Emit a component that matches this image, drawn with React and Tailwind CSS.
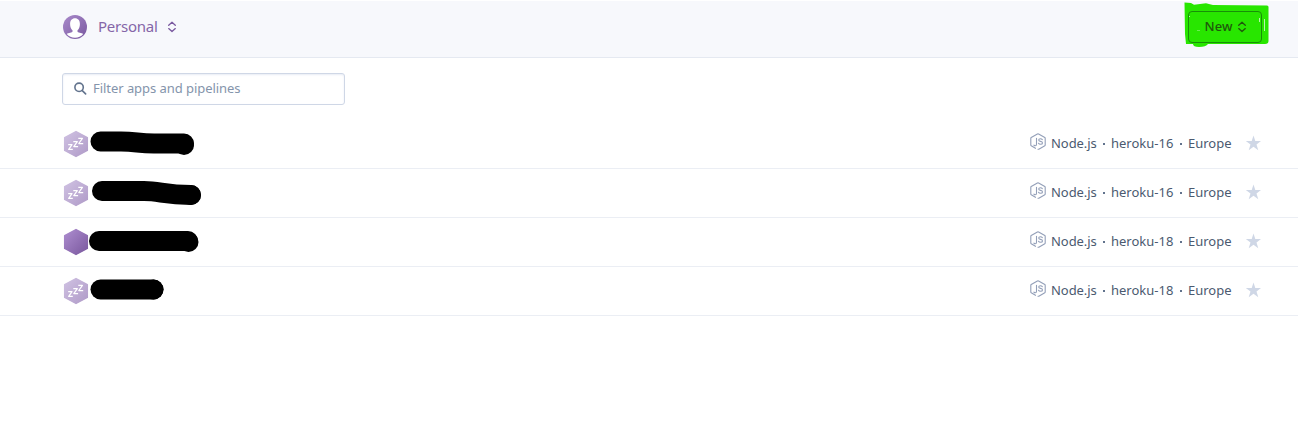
import React from 'react';

const APPS = [
  { id: 1, asleep: true, stack: 'heroku-16', mark: 'M44.500 21.500H65C80 21.700 82 23.200 98 23.500H128', blob: [128, 25] },
  { id: 2, asleep: true, stack: 'heroku-16', mark: 'M46 22 H88 C104 22 108 25.800 135 26', blob: [135, 26] },
  { id: 3, asleep: false, stack: 'heroku-18', mark: 'M43 23 H132', blob: [132.5, 24] },
  { id: 4, asleep: true, stack: 'heroku-18', mark: 'M44.500 22.500H97.500', blob: [97.5, 22.5] },
];

function UpDown({ className }) {
  return (
    <svg className={className} width="10" height="12" viewBox="0 0 10 12" fill="none" stroke="currentColor" strokeWidth="1.300" strokeLinecap="round" strokeLinejoin="round">
      <path d="M1.700 4.200 5 1.200l3.300 3M1.700 7.600 5 10.600l3.300-3" />
    </svg>
  );
}

function Avatar() {
  return (
    <svg className="shrink-0" width="24" height="24" viewBox="0 0 24 24">
      <defs>
        <linearGradient id="avatar" x1="0" y1="0" x2="1" y2="1">
          <stop stopColor="#a98acb" />
          <stop offset="1" stopColor="#79589f" />
        </linearGradient>
      </defs>
      <circle cx="12" cy="12" r="12" fill="url(#avatar)" />
      <path fill="#fff" d="M12 3.300c3 0 4.900 2.200 4.900 5.600 0 2.900-.9 5-2.400 6.300v1.300c0 1.300 4.300 1.300 5.700 2.500A11 11 0 0 1 12 22.800a11 11 0 0 1-8.200-3.800c1.400-1.200 5.700-1.200 5.700-2.500v-1.300C8 13.900 7.100 11.800 7.100 8.900c0-3.400 1.900-5.600 4.900-5.600Z" />
    </svg>
  );
}

function AppMark({ app }) {
  return (
    <svg className="shrink-0" width="150" height="48" viewBox="0 0 150 48">
      <defs>
        <linearGradient id={`hex${app.id}`} x1="0" y1="0" x2="1" y2="1">
          <stop stopColor={app.asleep ? '#cfc1e2' : '#ad8dcf'} />
          <stop offset="1" stopColor={app.asleep ? '#b09bc8' : '#7a589e'} />
        </linearGradient>
      </defs>
      <path d="M20 11.600 31.300 17.600V30.400L20 36.400 8.700 30.400V17.600Z" fill={`url(#hex${app.id})`} stroke={`url(#hex${app.id})`} strokeWidth="1.500" strokeLinejoin="round" />
      {app.asleep && (
        <path d="M12.200 24.600H16L12.700 29.400H16.800M17.300 21.600H21.300L17.800 26.600H22.100M22.300 18.400H26.400L22.800 23.500H27.200" fill="none" stroke="#fff" strokeWidth="1.250" strokeLinejoin="round" />
      )}
      <path d={app.mark} fill="none" stroke="#000" strokeWidth="20" strokeLinecap="round" strokeLinejoin="round" />
      <circle cx={app.blob[0]} cy={app.blob[1]} r="10" />
    </svg>
  );
}

function NodeIcon() {
  return (
    <svg className="shrink-0" width="16" height="18" viewBox="0 0 16 18" fill="none" stroke="#939fb8" strokeWidth="1.100" strokeLinejoin="round" strokeLinecap="round">
      <path d="M5.500 15.300 1.200 12.800Q.8 12.600.8 12V5.400Q.8 4.800 1.200 4.500L7.400 1Q8 .7 8.600 1L14.800 4.500Q15.200 4.800 15.200 5.400V12Q15.200 12.600 14.800 12.800L8.800 16.200Q8.400 16.400 8 16.200" />
      <path d="M6.500 5.300V11.300Q6.500 12.800 5.300 12.800 4.400 12.800 3.900 12.100M12.300 6.600Q11.700 5.800 10.400 5.800 8.700 5.800 8.700 7.100 8.700 8.300 10.500 8.400 12.500 8.600 12.500 9.900 12.500 11.200 10.600 11.200 9 11.200 8.500 10.200" />
    </svg>
  );
}

function Dot() {
  return (
    <span className="flex w-[14px] justify-center">
      <span className="size-[2px] bg-[#62738d]" />
    </span>
  );
}

function Star() {
  return (
    <svg className="mb-[2px] ml-[14px] shrink-0" width="16" height="16" viewBox="0 0 16 16" fill="#cfd7e6">
      <path d="M8.500.5 10.300 6H16L11.500 9.500 13.300 15.200 8.500 11.800 3.700 15.200 5.500 9.500.800 6H6.700Z" />
    </svg>
  );
}

function AppRow({ app }) {
  return (
    <li className="flex h-[49px] items-start justify-between border-b border-[#ebeef4] pl-14 pr-[37px]">
      <AppMark app={app} />
      <div className="flex h-[47px] items-center text-[13px] text-[#4b5a70]">
        <div className="flex pb-[3px]"><NodeIcon /></div>
        <span className="ml-[5px] w-[46px] whitespace-nowrap tracking-[-0.05px]">Node.js</span>
        <Dot />
        <span className="w-[63px] whitespace-nowrap">{app.stack}</span>
        <Dot />
        <span className="w-[43px] whitespace-nowrap">Europe</span>
        <Star />
      </div>
    </li>
  );
}

export default function App() {
  return (
    <div className="h-[424px] overflow-hidden bg-white pt-px font-['Noto_Sans',sans-serif]">
      <header className="flex h-[57px] items-start justify-between border-b border-[#e5e9f1] bg-[#f7f8fc] pl-[63px] pr-[29px]">
        <div className="flex h-[52px] items-center text-[#79589f]">
          <Avatar />
          <span className="ml-[11px] w-[60px] whitespace-nowrap pb-[2px] text-[15px] tracking-[-0.25px] text-[#8566a8]">Personal</span>
          <UpDown className="ml-[9px]" />
        </div>
        <div className="relative mt-px flex h-[46px] w-[85px] pl-[4px] pt-[9px]">
          <svg className="absolute left-0 top-0" width="85" height="46" viewBox="0 0 85 46">
            <path d="M.500.500 7 1 10 2.800 22 1.200 29 3 83 3.500Q84.500 3.500 84.500 5V39Q84.500 42 81 42H24Q22 45 15 45 9 45 9 42H2L1 32Z" fill="#28e600" />
            <path d="M80.500 17v12M75.500 16v4M4 14.500h2" stroke="#b9f3ae" strokeWidth="1" />
            <path d="M13 28.500h3" stroke="#6bec52" strokeWidth="1" />
          </svg>
          <button className="relative flex h-[32px] w-[74px] items-center rounded-[4px] border border-[#188f08] pl-[15px] text-[13px] font-medium text-[#20570c]">
            <span className="w-[29px]">New</span>
            <UpDown className="ml-[4px]" />
          </button>
        </div>
      </header>
      <main>
        <div className="pl-[62px] pt-[15px]">
          <label className="flex h-[32px] w-[283px] items-center rounded-[3px] border border-[#cfd7e6] bg-white pl-[11px] shadow-[inset_0_1px_2px_#e8ecf5]">
            <svg className="mb-px" width="13" height="13" viewBox="0 0 13 13" fill="none" stroke="#62738d" strokeWidth="1.600" strokeLinecap="round">
              <circle cx="5.100" cy="5.300" r="4.200" />
              <path d="m8.300 8.600 3.300 3.300" />
            </svg>
            <input className="ml-[6px] w-60 bg-transparent text-[13px] tracking-[-0.05px] text-[#4b5a70] outline-none placeholder:text-[#8494ab]" placeholder="Filter apps and pipelines" />
          </label>
        </div>
        <ul className="mt-[15px]">
          {APPS.map((app) => <AppRow key={app.id} app={app} />)}
        </ul>
      </main>
    </div>
  );
}
